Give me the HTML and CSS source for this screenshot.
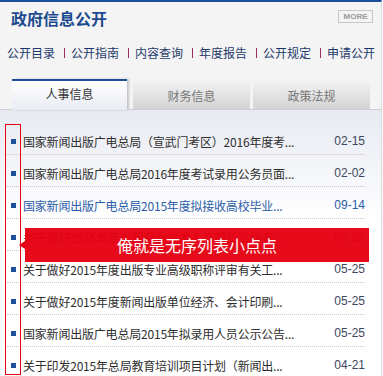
FILE: index.html
```html
<!DOCTYPE html>
<html lang="zh-CN">
<head>
    <meta charset="UTF-8">
    <meta name="viewport" content="width=device-width, initial-scale=1.0">
    <title>政府信息公开</title>
    <link rel="stylesheet" href="styles.css">
</head>
<body>
    <div class="box">
        <div class="hd">
            <h2 class="hd-title">政府信息公开</h2>
            <a class="more" href="#">MORE</a>
        </div>
        <nav class="nav">
            <a href="#">公开目录</a><span class="sep"></span>
            <a href="#">公开指南</a><span class="sep"></span>
            <a href="#">内容查询</a><span class="sep"></span>
            <a href="#">年度报告</a><span class="sep"></span>
            <a href="#">公开规定</a><span class="sep"></span>
            <a href="#">申请公开</a>
        </nav>
        <div class="tabs">
            <span class="tab active">人事信息</span>
            <span class="tab">财务信息</span>
            <span class="tab">政策法规</span>
        </div>
        <div class="list-wrap">
            <ul class="news">
                <li><a href="#">国家新闻出版广电总局（宣武门考区）2016年度考...</a><span class="date">02-15</span></li>
                <li><a href="#">国家新闻出版广电总局2016年度考试录用公务员面...</a><span class="date">02-02</span></li>
                <li class="visited"><a href="#">国家新闻出版广电总局2015年度拟接收高校毕业...</a><span class="date">09-14</span></li>
                <li><a href="#">关于做好2015年度出版专业技术人员职业资格考...</a><span class="date">05-25</span></li>
                <li><a href="#">关于做好2015年度出版专业高级职称评审有关工...</a><span class="date">05-25</span></li>
                <li><a href="#">关于做好2015年度新闻出版单位经济、会计印刷...</a><span class="date">05-25</span></li>
                <li><a href="#">国家新闻出版广电总局2015年拟录用人员公示公告...</a><span class="date">05-25</span></li>
                <li><a href="#">关于印发2015年总局教育培训项目计划（新闻出...</a><span class="date">04-21</span></li>
            </ul>
        </div>

        <!-- annotation -->
        <div class="mark"></div>
        <div class="tip">俺就是无序列表小点点</div>
    </div>
</body>
</html>
```

FILE: styles.css
```css
* {
    margin: 0;
    padding: 0;
    box-sizing: border-box;
}

body {
    background: #fff;
    font-family: "Noto Sans CJK SC", sans-serif;
    font-size: 12px;
    color: #333;
}

a {
    text-decoration: none;
    color: inherit;
}

.box {
    position: relative;
    width: 382px;
    height: 376px;
    overflow: hidden;
    background: #f4f4f4;
    border-top: 2px solid #1f4e9b;
    border-right: 1px solid #dcdcdc;
}

.hd {
    display: flex;
    justify-content: space-between;
    align-items: flex-start;
    height: 26px;
    padding: 0 8px 0 11px;
}

.hd-title {
    margin-top: 6px;
    font-size: 16px;
    line-height: 20px;
    font-weight: bold;
    color: #1c4a8e;
}

.more {
    margin-top: 8px;
    width: 35px;
    height: 13px;
    border: 1px solid #c8c8c8;
    font-family: "Liberation Sans", sans-serif;
    font-size: 8px;
    font-weight: bold;
    line-height: 11px;
    text-align: center;
    color: #999;
}

.nav {
    display: flex;
    align-items: center;
    margin-top: 15px;
    padding-left: 7px;
    height: 20px;
    line-height: 20px;
    font-size: 12px;
    color: #1d3a6b;
}

.sep {
    width: 1px;
    height: 10px;
    margin: 0 6px 0 9px;
    background: #9a2f63;
}

.tabs {
    display: flex;
    align-items: flex-start;
    gap: 3px;
    margin-top: 16px;
    padding-left: 12px;
    height: 31px;
    border-bottom: 1px solid #cfcfcf;
}

.tab {
    width: 117px;
    height: 27px;
    margin-top: 3px;
    line-height: 27px;
    text-align: center;
    font-size: 12px;
    color: #777;
    background: linear-gradient(#f1f1f1, #d4d4d4);
}

.tab.active {
    position: relative;
    width: 115px;
    height: 31px;
    margin: 0 3px 0 0;
    border-top: 2px solid #1f4e9b;
    line-height: 26px;
    color: #333;
    background: linear-gradient(#fff, #e9ecf3);
    box-shadow: 2px 0 2px #c4c4c4;
}

.list-wrap {
    height: 266px;
    padding: 13px 16px 0 7px;
    background: linear-gradient(#e7eaf2, #fff 110px);
}

.news {
    list-style: none;
}

.news li {
    display: flex;
    align-items: center;
    height: 32px;
    padding-top: 5px;
    border-bottom: 1px dotted #c8c8c8;
}

.news li::before {
    content: "";
    flex: none;
    width: 5px;
    height: 5px;
    margin: 0 7px 0 4px;
    background: #1f4e9b;
}

.news li a {
    flex: 1;
    white-space: nowrap;
    overflow: hidden;
    font-size: 12px;
    letter-spacing: -0.2px;
    color: #2e2e2e;
}

.news .date {
    font-family: "Liberation Sans", sans-serif;
    font-size: 12px;
    color: #3c4660;
}

.news li.visited a,
.news li.visited .date {
    color: #2a5ca8;
}

.mark {
    position: absolute;
    left: 5px;
    top: 122px;
    width: 16px;
    height: 251px;
    border: 1px solid #e60012;
}

.tip {
    position: absolute;
    left: 25px;
    top: 226px;
    width: 344px;
    height: 34px;
    line-height: 34px;
    text-align: center;
    font-size: 16px;
    color: #fff;
    background: rgba(230, 0, 18, 0.96);
}

.tip::before {
    content: "";
    position: absolute;
    left: -6px;
    top: 13px;
    border-style: solid;
    border-width: 4px 6px 4px 0;
    border-color: transparent #e60012 transparent transparent;
}
```
